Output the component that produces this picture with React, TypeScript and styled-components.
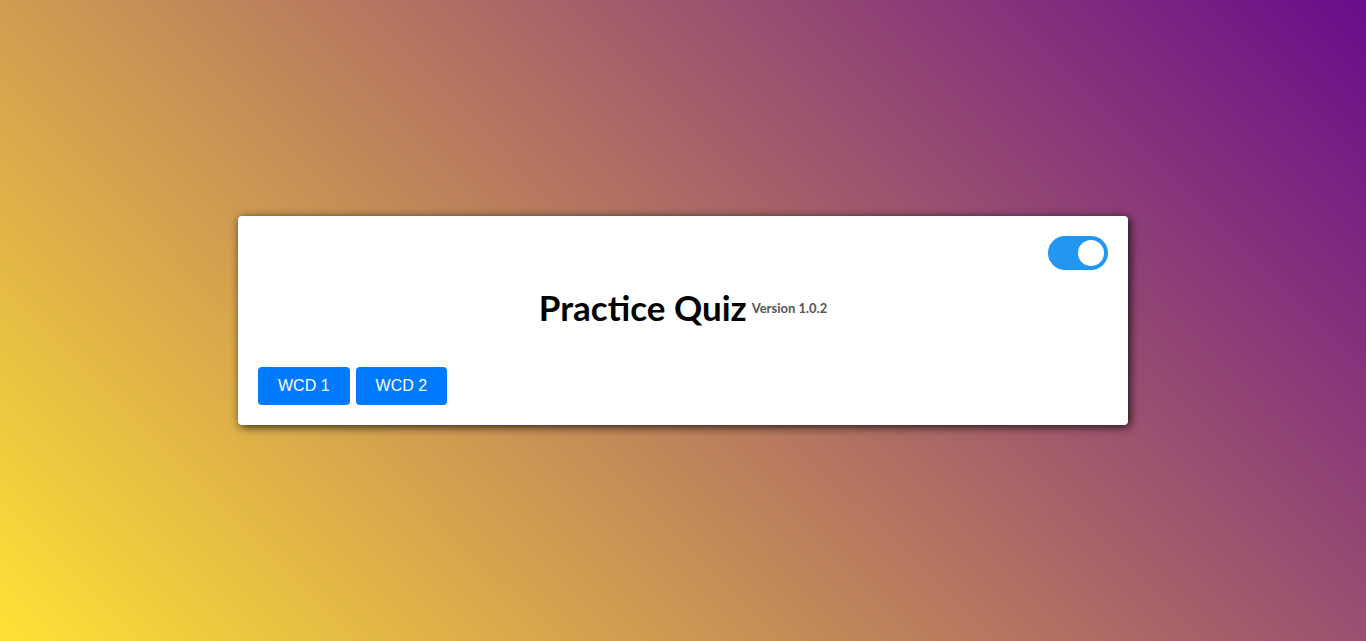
import { useState } from 'react';
import styled, { createGlobalStyle } from 'styled-components';

const GlobalStyle = createGlobalStyle`
	html, body {
		margin: 0;
		padding: 0;
	}
	body {
		min-height: 100vh;
		font-family: 'Liberation Sans', Arial, sans-serif;
		background: linear-gradient(45deg, #ffe135 0%, #6a0c8b 100%);
	}
`;

const Page = styled.div`
	display: flex;
	align-items: center;
	justify-content: center;
	min-height: 100vh;
`;

const Card = styled.div`
	box-sizing: border-box;
	width: 890px;
	padding: 20px;
	background-color: #fff;
	border-radius: 4px;
	box-shadow: 2px 2px 10px rgba(0, 0, 0, 0.8);
`;

const TopRow = styled.div`
	display: flex;
	justify-content: flex-end;
`;

const Switch = styled.button<{ $on: boolean }>`
	position: relative;
	width: 60px;
	height: 34px;
	padding: 0;
	border: 0;
	border-radius: 34px;
	background-color: ${(p) => (p.$on ? '#2196f3' : '#ccc')};
	cursor: pointer;
	transition: background-color 0.3s;

	&::before {
		content: '';
		position: absolute;
		left: 4px;
		bottom: 4px;
		width: 26px;
		height: 26px;
		border-radius: 50%;
		background-color: #fff;
		transform: translateX(${(p) => (p.$on ? '26px' : '0')});
		transition: transform 0.3s;
	}
`;

const Title = styled.h1`
	margin: 17px 0 38px;
	text-align: center;
	font-family: 'Lato', 'Open Sans', sans-serif;
	font-size: 35px;
	font-weight: 700;
	line-height: 41px;
	color: #000;
`;

const Version = styled.span`
	margin-left: 5px;
	font-size: 13px;
	font-weight: 700;
	color: #555;
	vertical-align: 8px;
`;

const Buttons = styled.div`
	display: flex;
	gap: 6px;
`;

const QuizButton = styled.button`
	padding: 10px 20px;
	border: 0;
	border-radius: 4px;
	background-color: #007bff;
	color: #fff;
	font-family: 'Liberation Sans', Arial, sans-serif;
	font-size: 16px;
	line-height: 18px;
	cursor: pointer;
`;

export default function App() {
	const [dark, setDark] = useState(true);
	return (
		<>
			<GlobalStyle />
			<Page>
				<Card>
					<TopRow>
						<Switch $on={dark} onClick={() => setDark(!dark)} aria-label="toggle" />
					</TopRow>
					<Title>
						Practice Quiz<Version>Version 1.0.2</Version>
					</Title>
					<Buttons>
						<QuizButton>WCD 1</QuizButton>
						<QuizButton>WCD 2</QuizButton>
					</Buttons>
				</Card>
			</Page>
		</>
	);
}
